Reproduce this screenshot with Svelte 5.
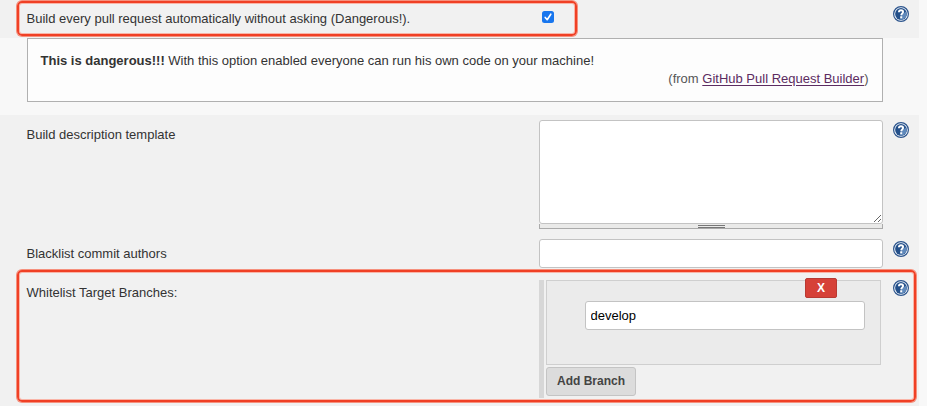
<script>
  let buildAll = $state(true);
  let template = $state('');
  let authors = $state('');
  let branch = $state('develop');
</script>

{#snippet help()}
  <span class="help">
    <svg width="16" height="16" viewBox="0 0 16 16" aria-hidden="true">
      <circle cx="8" cy="8" r="7.4" fill="#f4f8fc" stroke="#2c548c" stroke-width="1.2" />
      <circle cx="8" cy="8" r="5.9" fill="#24508a" />
      <path d="M8 9 L13.2 5.6 A5.9 5.9 0 0 1 7 13.8Z" fill="#6089bb" />
      <path d="M5.9 6.2C6 4.9 6.8 4.3 8 4.3c1.3 0 2.1.7 2.1 1.7 0 1.5-1.9 1.5-1.9 3.3" fill="none" stroke="#fff" stroke-width="1.9" />
      <rect x="7.2" y="10.3" width="2" height="2" fill="#fff" />
    </svg>
  </span>
{/snippet}

<div class="page">
  <div class="form">
    <div class="row first">
      <span class="label">Build every pull request automatically without asking (Dangerous!).</span>
      <div class="control">
        <button class="check" aria-label="Build every pull request" aria-pressed={buildAll} onclick={() => (buildAll = !buildAll)}>
          {#if buildAll}
            <svg width="12" height="12" viewBox="0 0 12 12"><path d="M3.2 6.4 5.2 8.7 8.8 3.2" fill="none" stroke="#fff" stroke-width="1.6" stroke-linecap="round" stroke-linejoin="round" /></svg>
          {/if}
        </button>
      </div>
      {@render help()}
    </div>

    <div class="notearea">
      <div class="note">
        <div><b>This is dangerous!!!</b> With this option enabled everyone can run his own code on your machine!</div>
        <div class="from">(from <a href="#builder">GitHub Pull Request Builder</a>)</div>
      </div>
    </div>

    <div class="row template">
      <span class="label">Build description template</span>
      <div class="control">
        <div class="areawrap">
          <textarea aria-label="Build description template" bind:value={template}></textarea>
          <svg class="grip" width="9" height="9" viewBox="0 0 9 9"><path d="M1 8 8 1M5 8 8 5" stroke="#666" stroke-width="1" fill="none" /></svg>
        </div>
        <div class="handle"><i></i></div>
      </div>
      {@render help()}
    </div>

    <div class="row authors">
      <span class="label">Blacklist commit authors</span>
      <div class="control"><input aria-label="Blacklist commit authors" bind:value={authors} /></div>
      {@render help()}
    </div>

    <div class="row branches">
      <span class="label">Whitelist Target Branches:</span>
      <div class="control repeat">
        <div class="chunk">
          <button class="delete">X</button>
          <input aria-label="Branch" bind:value={branch} />
        </div>
        <button class="add">Add Branch</button>
      </div>
      {@render help()}
    </div>
  </div>
  <div class="mark one"></div>
  <div class="mark two"></div>
</div>

<style>
  :global(body) { margin: 0; background: #f8f8f8; }
  .page, .page * { box-sizing: border-box; }
  .page {
    position: relative;
    width: 927px;
    height: 406px;
    overflow: hidden;
    font: 13px/18px "Liberation Sans", Arial, sans-serif;
    color: #333;
    background: #f8f8f8;
  }
  .form { width: 919px; }
  .row { display: flex; align-items: flex-start; background: #f1f1f1; padding-left: 26.5px; }
  .label { width: 512.5px; flex: none; white-space: nowrap; }
  .control { width: 344px; flex: none; }
  .help { width: 16px; height: 16px; margin-left: 10px; flex: none; }
  .help svg { display: block; }

  .first { height: 38px; padding-top: 6px; }
  .first .label { padding-top: 4px; }
  .first .control { padding: 5px 0 0 3px; }
  .check {
    display: block;
    width: 12px;
    height: 12px;
    padding: 0;
    border: 0;
    border-radius: 2.5px;
    background: #1876ee;
  }
  .check svg { display: block; }

  .notearea { height: 77px; padding-left: 27px; }
  .note {
    width: 856px;
    height: 64px;
    padding: 13px 13.5px 0 12.5px;
    border: 1px solid #b0b0b0;
    background: #fdfdfd;
    white-space: nowrap;
  }
  .from { text-align: right; color: #555; }
  a { color: #5c2c61; text-decoration: underline; text-underline-offset: 2px; }

  .template { height: 119px; padding-top: 5px; }
  .template .label { padding-top: 6px; }
  .template .help { margin-top: 2px; }
  .areawrap { position: relative; height: 104px; }
  textarea, input {
    display: block;
    border: 1px solid #c3c3c3;
    border-radius: 3px;
    background: #fff;
    color: #000;
    font: 13px "Liberation Sans", Arial, sans-serif;
    outline: 0;
  }
  textarea { width: 344px; height: 104px; resize: none; }
  .grip { position: absolute; right: 1px; bottom: 1px; }
  .handle {
    height: 5px;
    border: 1px solid #aaa;
    border-top: 0;
    background: #eaeae9;
    display: flex;
    justify-content: center;
  }
  .handle i { width: 27px; height: 3px; margin-top: 1px; border: solid #777; border-width: 1px 0; }

  .authors { height: 39px; padding-top: 5px; }
  .authors .label { padding-top: 6px; }
  .authors .help { margin-top: 2px; }
  input { width: 344px; height: 29px; padding: 0 4.5px; }

  .branches { height: 133px; padding-top: 7px; }
  .branches .label { padding-top: 4px; }
  .repeat { height: 118px; border-left: 5px solid #d7d7d7; padding-left: 2px; }
  .chunk { width: 335px; height: 85px; border: 1px solid #cfcfcf; background: #ebebeb; display: flex; flex-direction: column; }
  .chunk input { width: 280px; margin: 3px 0 0 38px; flex: none; }
  .delete {
    width: 32px;
    height: 20px;
    flex: none;
    margin: -3px 43px 0 0;
    align-self: flex-end;
    padding: 0;
    border: 1px solid #b83a33;
    border-radius: 2px;
    background: #d64138;
    color: #fff;
    font: bold 12px/18px "Liberation Sans", Arial, sans-serif;
  }
  .add {
    display: block;
    width: 90px;
    height: 29px;
    margin-top: 2px;
    padding: 0 0 1px;
    border: 1px solid #c4c4c4;
    border-radius: 3px;
    background: #dcdcdc;
    color: #444;
    font: bold 12px/26px "Liberation Sans", Arial, sans-serif;
  }
  .mark {
    position: absolute;
    border: 2px solid #f04025;
    border-radius: 5px;
    box-shadow: 0 0 0 1px #f5917e, inset 0 0 0 1px #f9b5a8;
    pointer-events: none;
  }
  .one { left: 17px; top: 1px; width: 560px; height: 35px; }
  .two { left: 17px; top: 270px; width: 899px; height: 132px; }
</style>
